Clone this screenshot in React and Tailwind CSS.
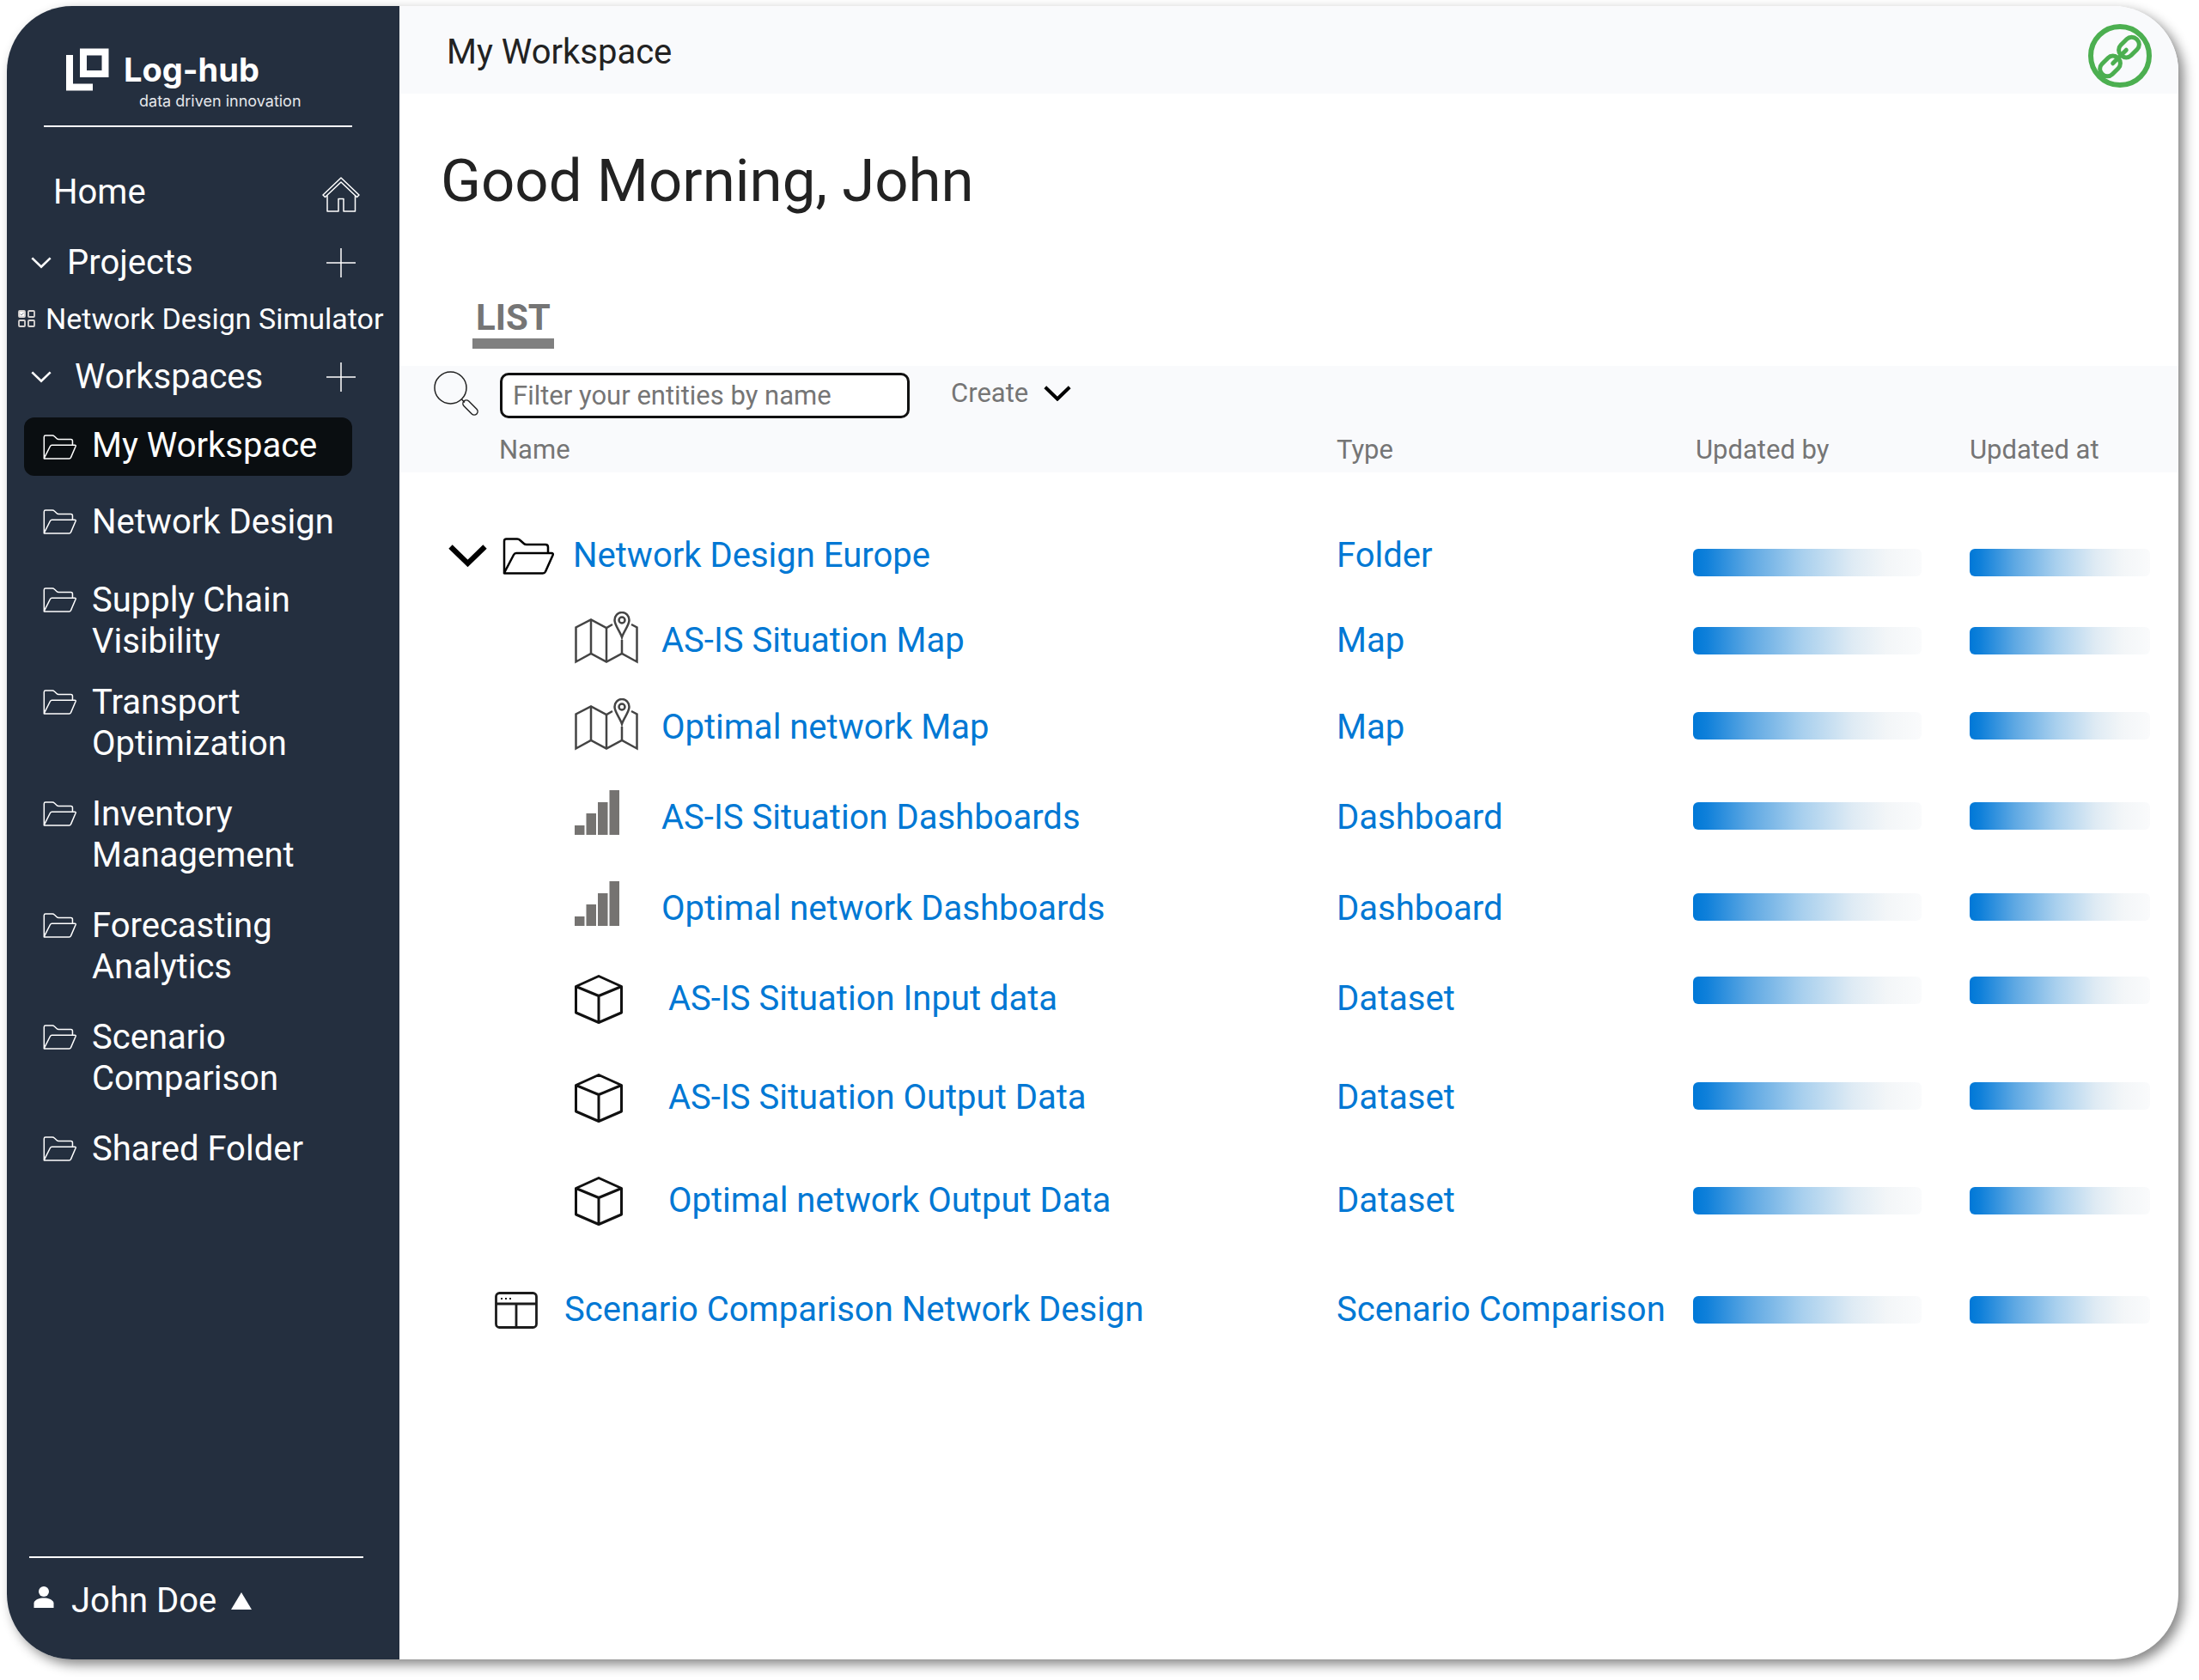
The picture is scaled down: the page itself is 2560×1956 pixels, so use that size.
const FolderIcon = ({ className, stroke = 1.5 }) => (
  <svg viewBox="0 0 60 43" preserveAspectRatio="none" className={className} fill="none" stroke="currentColor" strokeWidth={stroke} strokeLinejoin="round" aria-hidden="true">
    <path vectorEffect="non-scaling-stroke" d="M2 41V4Q2 1.5 4.500 1.500H17Q19 1.500 20.500 3L25 7Q26 8 28 8H50Q53 8 53 11V18M2 41L13 20Q14 18 16 18H57Q59.500 18 58.500 20.500L50 39.500Q49 41.500 47 41.500H3Q1.500 41.500 2 41Z" />
  </svg>
);

const Chevron = ({ className, stroke }) => (
  <svg viewBox="0 0 36 21" className={className} fill="none" stroke="currentColor" strokeWidth={stroke} aria-hidden="true">
    <path d="M2 2L18 17.500L34 2" />
  </svg>
);

const PlusIcon = () => (
  <svg viewBox="0 0 34 34" className="size-[34px]" stroke="currentColor" strokeWidth="1.5" aria-hidden="true">
    <path d="M17 0V34M0 17H34" />
  </svg>
);

const HomeIcon = () => (
  <svg viewBox="0 0 44 41" className="h-[41px] w-11" fill="none" stroke="currentColor" strokeWidth="1.5" strokeLinejoin="round" aria-hidden="true">
    <path d="M22 1L43 21L40.500 23.500L22 6L3.500 23.500L1 21Z" />
    <path d="M6 21.500V40H19V25.500H25V40H38.500V21.500" />
  </svg>
);

const SimulatorIcon = () => (
  <svg viewBox="0 0 20 20" className="size-5 shrink-0" fill="none" stroke="#d9d5d3" strokeWidth="1.8" aria-hidden="true">
    <rect x="1" y="1" width="7" height="7" rx="1" fill="#fff" />
    <path d="M2.500 4.500L4 6L6.500 3" stroke="#8a8f98" strokeWidth="1" />
    <rect x="12" y="1" width="7" height="7" rx="1" />
    <rect x="1" y="12" width="7" height="7" rx="1" />
    <rect x="12" y="12" width="7" height="7" rx="1" />
  </svg>
);

const MapIcon = () => (
  <svg viewBox="0 0 74 68" className="h-[68px] w-[74px]" fill="none" stroke="#444" strokeWidth="2.5" aria-hidden="true">
    <path d="M44 15L37 19L19 9.500L1.500 18.500V58.500L19 49L37 58.500L55 49L72.500 58.500V18.500L66 15" />
    <path d="M19 9.500V49M37 19V58.500M55 33V49" />
    <path d="M55 30C53 23 46.500 16 46.500 10A8.500 9 0 0 1 63.500 10C63.500 16 57 23 55 30Z" />
    <circle cx="55" cy="10" r="3.500" />
  </svg>
);

const DashboardIcon = () => (
  <svg viewBox="0 0 52 64" className="h-16 w-[52px]" fill="#757371" aria-hidden="true">
    <path d="M0 41H11.500V52H0ZM13.500 27H25V52H13.500ZM27 14H38.500V52H27ZM40.500 0H52V52H40.500Z" />
  </svg>
);

const DatasetIcon = () => (
  <svg viewBox="0 0 56 57" className="h-[57px] w-14" fill="none" stroke="#111" strokeWidth="3" strokeLinejoin="round" aria-hidden="true">
    <path d="M28 1.500L54.500 13.500V44L28 55.500L1.500 44V13.500ZM1.500 13.500L28 24.500L54.500 13.500M28 24.500V55.500" />
  </svg>
);

const ScenarioIcon = () => (
  <svg viewBox="0 0 50 43" className="h-[43px] w-[50px]" fill="none" stroke="#1c1c1c" strokeWidth="2.8" aria-hidden="true">
    <rect x="1.500" y="1.500" width="47" height="40" rx="4" />
    <path d="M1.500 14H48.500M25 14V41.500" />
    <path d="M7 8H9M12 8H14M17 8H19" strokeWidth="2" />
  </svg>
);

const SearchIcon = () => (
  <svg viewBox="0 0 52 52" className="size-[52px]" fill="none" stroke="#222" strokeWidth="1.5" aria-hidden="true">
    <circle cx="19.500" cy="19.500" r="18.500" />
    <path d="M32.500 33L36 36.500" />
    <rect x="-4" y="-10.500" width="8" height="21" rx="4" transform="translate(42.500 42.500) rotate(-45)" />
  </svg>
);

const LinkIcon = () => (
  <svg viewBox="0 0 74 74" className="size-[74px]" fill="none" stroke="#4caf50" aria-hidden="true">
    <circle cx="37" cy="37" r="34" strokeWidth="6" />
    <g transform="translate(36.500 38) rotate(-45)" strokeWidth="5" strokeLinecap="round">
      <rect x="2.500" y="-8.500" width="26" height="17" rx="8" />
      <rect x="-28.500" y="-8.500" width="26" height="17" rx="8" />
      <path d="M-11 0H11" />
    </g>
  </svg>
);

const workspaces = [
  { label: "Network Design", gap: "mt-[30px]" },
  { label: "Supply Chain Visibility", gap: "mt-[43px]" },
  { label: "Transport Optimization", gap: "mt-[23px]" },
  { label: "Inventory Management", gap: "mt-[34px]" },
  { label: "Forecasting Analytics", gap: "mt-[34px]" },
  { label: "Scenario Comparison", gap: "mt-[34px]" },
  { label: "Shared Folder", gap: "mt-[34px]" },
];

const entities = [
  { name: "AS-IS Situation Map", type: "Map", Icon: MapIcon, height: "h-[100px]" },
  { name: "Optimal network Map", type: "Map", Icon: MapIcon, height: "h-[102px]", bar: "pb-1" },
  { name: "AS-IS Situation Dashboards", type: "Dashboard", Icon: DashboardIcon, height: "h-[108px]", bar: "pb-1" },
  { name: "Optimal network Dashboards", type: "Dashboard", Icon: DashboardIcon, height: "h-[104px]", bar: "pb-1" },
  { name: "AS-IS Situation Input data", type: "Dataset", Icon: DatasetIcon, height: "h-[106px]", wide: true, bar: "pb-5" },
  { name: "AS-IS Situation Output Data", type: "Dataset", Icon: DatasetIcon, height: "h-[124px]", wide: true, bar: "pb-1" },
  { name: "Optimal network Output Data", type: "Dataset", Icon: DatasetIcon, height: "h-[116px]", wide: true },
];

const Bar = ({ className }) => (
  <div className={`h-8 rounded-md bg-[linear-gradient(90deg,#0078d7_0%,#0f80da_6%,#5ea8e3_25%,#a9d0ee_48%,#dfebf4_70%,#f3f6f8_85%,#fafbfc_100%)] ${className}`} />
);

const Row = ({ height, type, bar = "", children }) => (
  <tr className={height}>
    <td>{children}</td>
    <td><a href="#type" className="whitespace-nowrap">{type}</a></td>
    <td className={bar}><Bar className="w-[266px]" /></td>
    <td className={bar}><Bar className="w-[210px]" /></td>
  </tr>
);

function Sidebar() {
  return (
    <aside className="flex w-[457px] shrink-0 flex-col bg-[#242f3f] text-[40px] leading-[48px] text-white">
      <div className="ml-[43px] mr-[55px] flex h-[141px] flex-col border-b-2 border-white pl-[26px] pt-[49px]">
        <div className="flex gap-[17px]">
          <svg viewBox="0 0 50 50" className="size-[50px]" fill="none" stroke="#fff" strokeWidth="8" aria-hidden="true">
            <path d="M4 8V45.500H31" />
            <rect x="20" y="4.500" width="25.500" height="25.500" />
          </svg>
          <span className="font-[Inter,sans-serif] text-[38px] font-bold leading-[50px]">Log-hub</span>
        </div>
        <span className="ml-[85px] whitespace-nowrap font-[Inter,sans-serif] text-lg leading-6 text-gray-200">data driven innovation</span>
      </div>
      <nav className="flex flex-col">
        <a href="#home" className="ml-[54px] mr-[46px] mt-[50px] flex h-14 items-center justify-between">
          <span className="pb-1">Home</span>
          <HomeIcon />
        </a>
        <div className="ml-7 mr-[51px] mt-[22px] flex h-[60px] items-center justify-between">
          <button className="flex items-center gap-[18px]">
            <Chevron className="w-6" stroke={4} />
            <span>Projects</span>
          </button>
          <button aria-label="Add project"><PlusIcon /></button>
        </div>
        <a href="#simulator" className="ml-[13px] mt-[11px] flex h-12 items-center gap-3 whitespace-nowrap text-[34px]">
          <SimulatorIcon />
          Network Design Simulator
        </a>
        <div className="ml-7 mr-[51px] mt-[14px] flex h-[60px] items-center justify-between">
          <button className="flex items-center gap-[27px]">
            <Chevron className="w-6" stroke={4} />
            <span>Workspaces</span>
          </button>
          <button aria-label="Add workspace"><PlusIcon /></button>
        </div>
        <a href="#my-workspace" className="ml-5 mr-[55px] mt-[17px] flex h-[68px] items-center gap-[18px] rounded-xl bg-[#0a0e11] pl-[22px]" aria-current="page">
          <FolderIcon className="h-[29px] w-[39px]" />
          <span className="pb-0.5">My Workspace</span>
        </a>
        {workspaces.map(({ label, gap }) => (
          <a key={label} href="#workspace" className={`ml-[42px] mr-16 flex items-start gap-[18px] ${gap}`}>
            <FolderIcon className="mt-[9px] h-[29px] w-[39px] shrink-0" />
            <span className={label === "Network Design" ? "whitespace-nowrap" : "max-w-[270px]"}>{label}</span>
          </a>
        ))}
      </nav>
      <div className="ml-[26px] mr-[42px] mt-auto border-t-2 border-white pb-11 pt-[26px]">
        <button className="flex items-center pl-[5px]">
          <svg viewBox="0 0 24 26" className="mb-2 w-6" fill="currentColor" aria-hidden="true">
            <circle cx="12" cy="6" r="6" />
            <path d="M0.500 25V19C2 15 7 13.500 12 13.500S22 15 23.500 19V25Z" />
          </svg>
          <span className="ml-5">John Doe</span>
          <svg viewBox="0 0 24 20" className="ml-[17px] w-6" fill="currentColor" aria-hidden="true"><path d="M12 0L24 20H0Z" /></svg>
        </button>
      </div>
    </aside>
  );
}

export default function App() {
  return (
    <div className="flex min-h-screen bg-white pb-6 pl-2 pr-6 pt-[7px] font-[Roboto,sans-serif] text-[#222]">
      <div className="flex flex-1 overflow-hidden rounded-[76px] bg-white shadow-[6px_6px_14px_rgba(0,0,0,0.48)]">
        <Sidebar />
        <main className="min-w-0 flex-1">
          <header className="flex h-[102px] items-center justify-between bg-[#f9fafc] pl-[55px] pr-[31px]">
            <span className="pt-1.5 text-[40px] leading-[48px]">My Workspace</span>
            <button aria-label="Copy link" className="mt-[14px]"><LinkIcon /></button>
          </header>
          <h1 className="ml-12 mt-[60px] text-[69px] leading-[84px]">Good Morning, John</h1>
          <div className="ml-[85px] mt-[85px] flex">
            <button className="border-b-[12px] border-[#808080] px-1 pt-2 text-[42px] font-bold leading-[48px] text-[#757575]">LIST</button>
          </div>
          <div className="mt-5 flex h-[72px] items-start bg-[#f9fafc] pl-10 text-[31px] text-[#757575]">
            <label htmlFor="filter" className="mt-1.5" aria-label="Filter"><SearchIcon /></label>
            <input id="filter" type="text" placeholder="Filter your entities by name" className="ml-[25px] mt-2 h-[53px] w-[477px] rounded-[10px] border-3 border-[#111] bg-white px-3 placeholder:text-[#757575] placeholder:opacity-100" />
            <button className="ml-12 mt-2 flex h-12 items-center gap-[18px]">
              Create
              <Chevron className="w-8 text-black" stroke={4.5} />
            </button>
          </div>
          <table className="w-full table-fixed border-collapse text-left text-[40px] leading-[48px] text-[#0078d4]">
            <colgroup>
              <col />
              <col className="w-[415px]" />
              <col className="w-[322px]" />
              <col className="w-[243px]" />
            </colgroup>
            <thead className="bg-[#f9fafc] text-[31px] leading-[52px] text-[#757575]">
              <tr>
                <th className="pl-[116px] font-normal">Name</th>
                <th className="font-normal">Type</th>
                <th className="pl-[3px] font-normal">Updated by</th>
                <th className="font-normal">Updated at</th>
              </tr>
            </thead>
            <tbody className="before:block before:h-12 before:content-['']">
              <Row height="h-[98px]" type="Folder" bar="pt-4">
                <div className="flex items-center pl-[57px]">
                  <button aria-label="Collapse folder" className="text-black"><Chevron className="w-[45px]" stroke={5} /></button>
                  <FolderIcon className="ml-[18px] h-[43px] w-[60px] text-black" stroke={2.5} />
                  <a href="#folder" className="ml-[22px]">Network Design Europe</a>
                </div>
              </Row>
              {entities.map(({ name, type, Icon, height, wide, bar }) => (
                <Row key={name} height={height} type={type} bar={bar}>
                  <div className="flex items-center pl-[204px]">
                    <div className={wide ? "w-[109px]" : "w-[101px]"}><Icon /></div>
                    <a href="#entity">{name}</a>
                  </div>
                </Row>
              ))}
              <Row height="h-[138px]" type="Scenario Comparison">
                <div className="flex items-center gap-[31px] pl-[111px]">
                  <ScenarioIcon />
                  <a href="#scenario">Scenario Comparison Network Design</a>
                </div>
              </Row>
            </tbody>
          </table>
        </main>
      </div>
    </div>
  );
}
